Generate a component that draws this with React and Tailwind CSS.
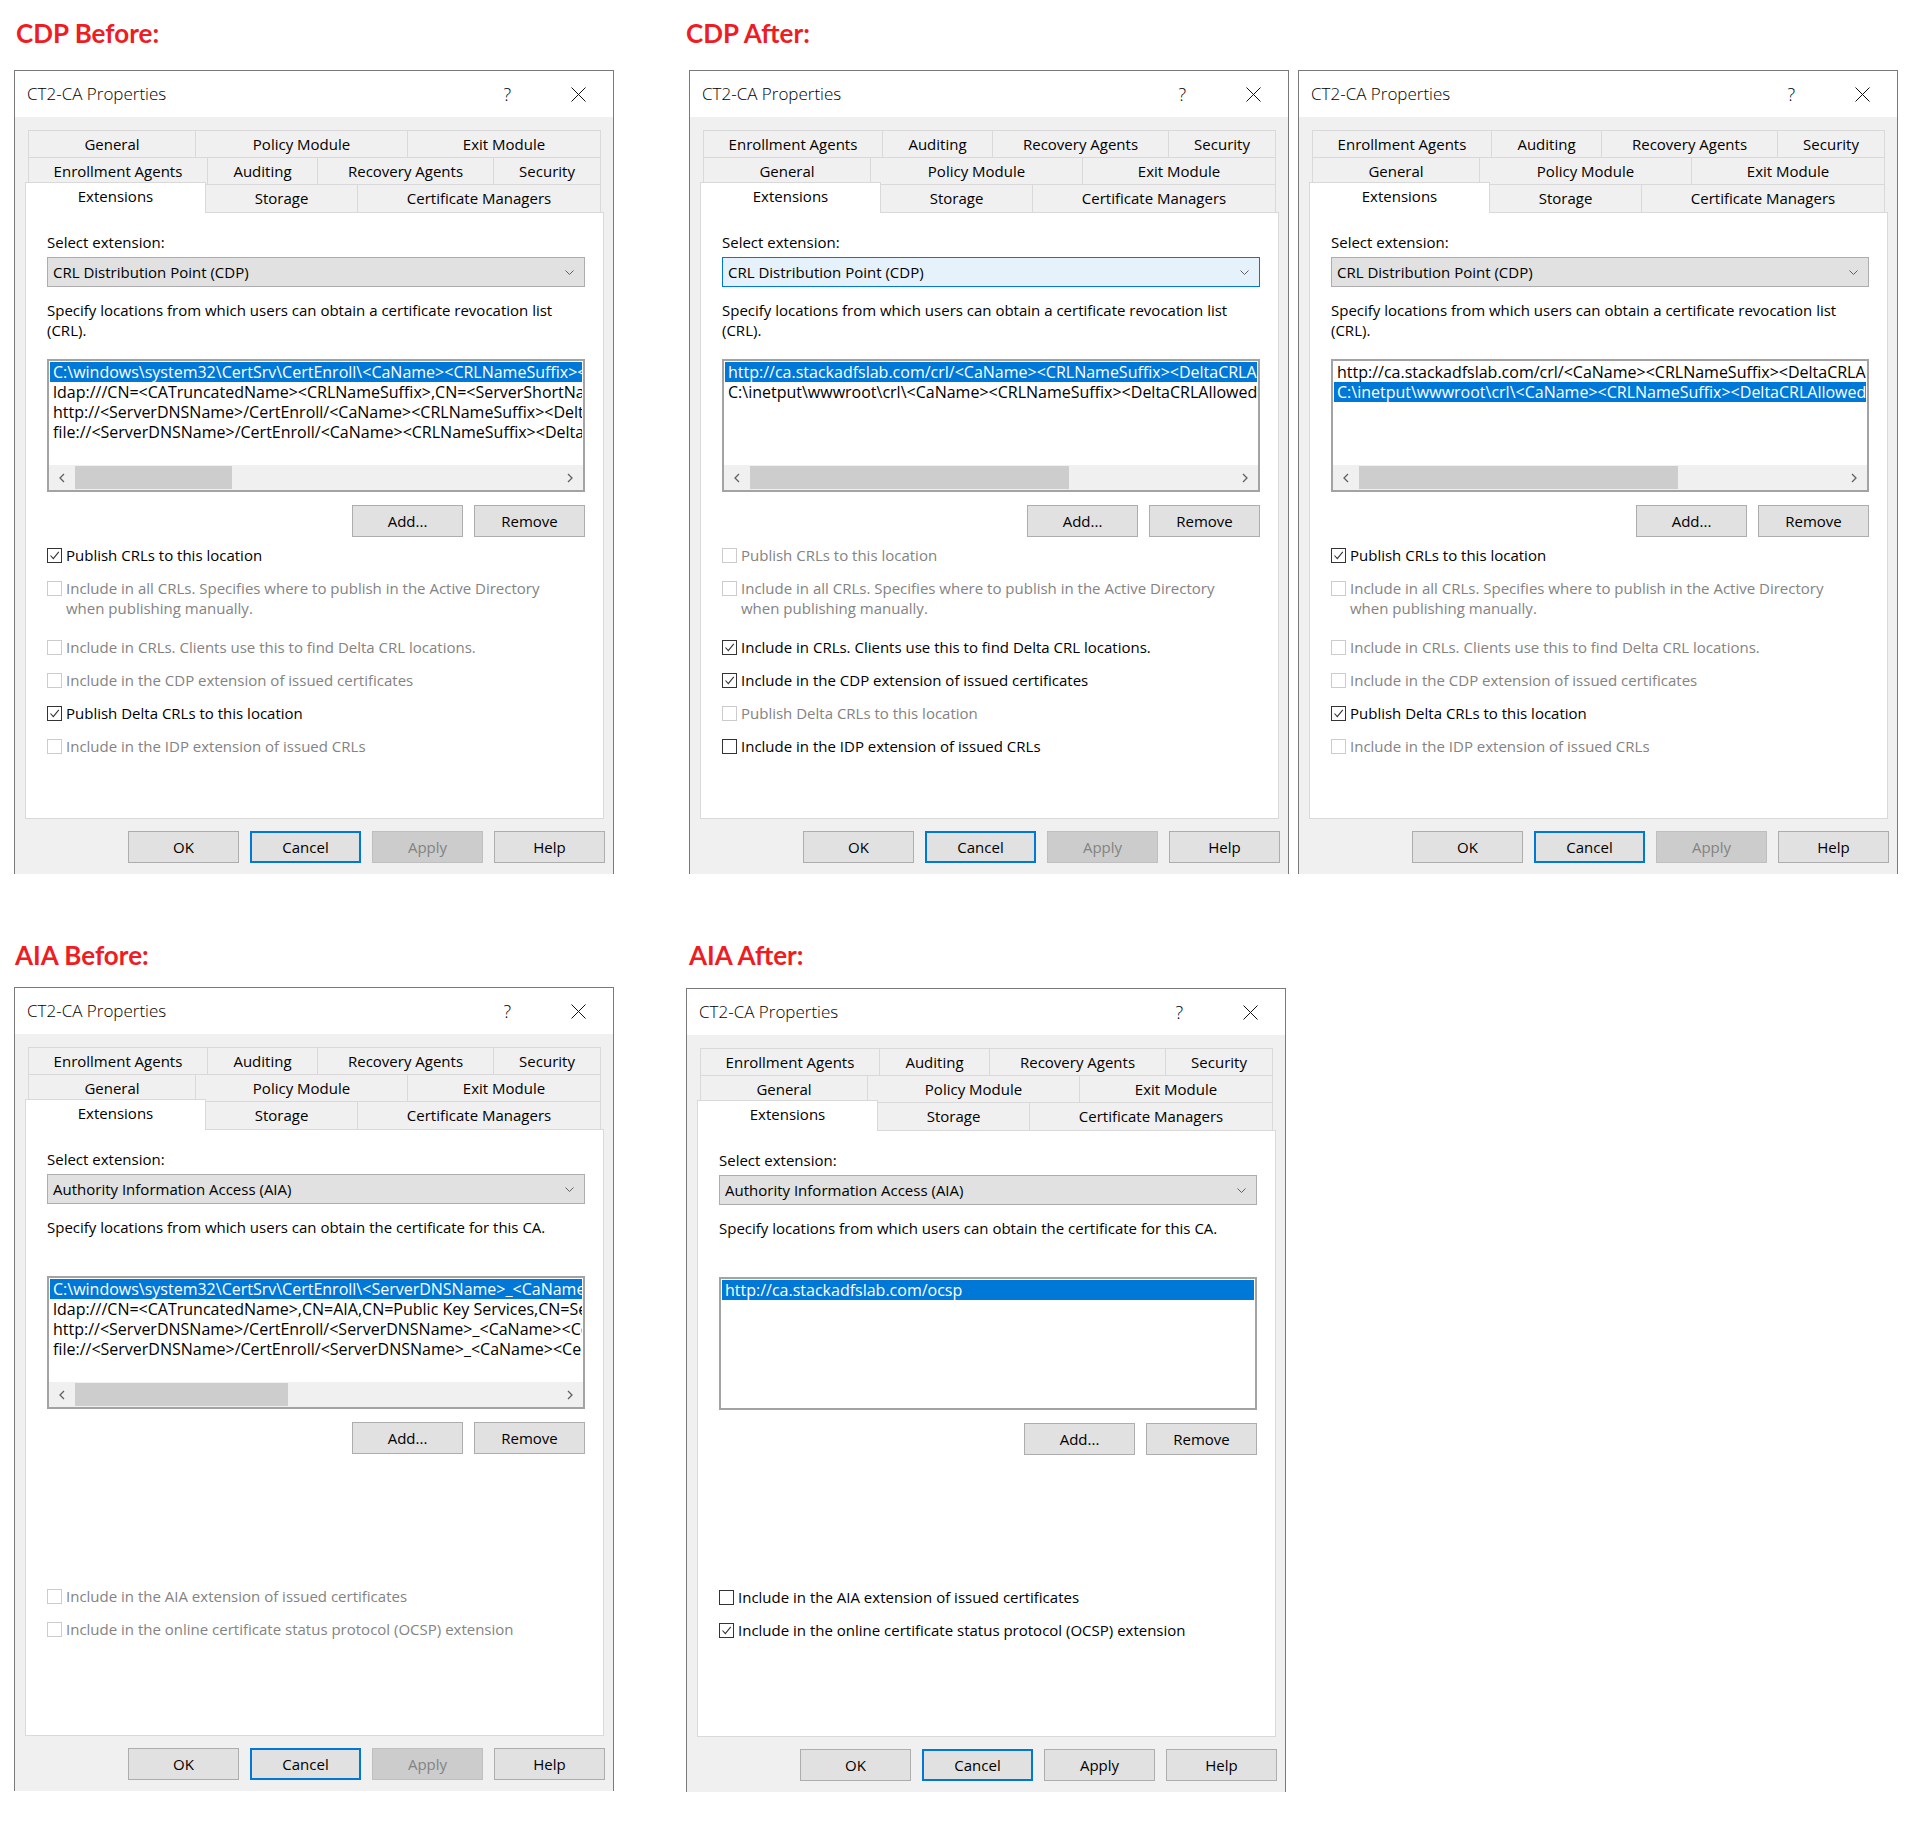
import React from 'react';

const FONT = "font-['Open_Sans','Noto_Sans',sans-serif]";

const ROW_GENERAL = [
  ['General', 'w-[168px]'],
  ['Policy Module', 'w-[212px]'],
  ['Exit Module', 'flex-1'],
];
const ROW_ENROLL = [
  ['Enrollment Agents', 'w-[180px]'],
  ['Auditing', 'w-[110px]'],
  ['Recovery Agents', 'w-[176px]'],
  ['Security', 'flex-1'],
];

const CDP_LABELS = [
  ['Publish CRLs to this location'],
  ['Include in all CRLs. Specifies where to publish in the Active Directory', 'when publishing manually.'],
  ['Include in CRLs. Clients use this to find Delta CRL locations.'],
  ['Include in the CDP extension of issued certificates'],
  ['Publish Delta CRLs to this location'],
  ['Include in the IDP extension of issued CRLs'],
];

// [checked, enabled] for each of the six CDP options
const cdpChecks = (states) =>
  CDP_LABELS.map((lines, i) => ({ lines, checked: states[i][0], enabled: states[i][1] }));

const CDP_DESC = ['Specify locations from which users can obtain a certificate revocation list', '(CRL).'];
const AIA_DESC = ['Specify locations from which users can obtain the certificate for this CA.'];

const CDP_BEFORE_ITEMS = [
  'C:\\windows\\system32\\CertSrv\\CertEnroll\\<CaName><CRLNameSuffix><DeltaCRLAllowed>.crl',
  'ldap:///CN=<CATruncatedName><CRLNameSuffix>,CN=<ServerShortName>,CN=CDP,CN=Public Key Services,CN=Services',
  'http://<ServerDNSName>/CertEnroll/<CaName><CRLNameSuffix><DeltaCRLAllowed>.crl',
  'file://<ServerDNSName>/CertEnroll/<CaName><CRLNameSuffix><DeltaCRLAllowed>.crl',
];
const CDP_AFTER_ITEMS = [
  'http://ca.stackadfslab.com/crl/<CaName><CRLNameSuffix><DeltaCRLAllowed>.crl',
  'C:\\inetput\\wwwroot\\crl\\<CaName><CRLNameSuffix><DeltaCRLAllowed>.crl',
];
const AIA_BEFORE_ITEMS = [
  'C:\\windows\\system32\\CertSrv\\CertEnroll\\<ServerDNSName>_<CaName><CertificateName>.crt',
  'ldap:///CN=<CATruncatedName>,CN=AIA,CN=Public Key Services,CN=Services,<ConfigurationContainer>',
  'http://<ServerDNSName>/CertEnroll/<ServerDNSName>_<CaName><CertificateName>.crt',
  'file://<ServerDNSName>/CertEnroll/<ServerDNSName>_<CaName><CertificateName>.crt',
];

const Heading = ({ children, className = '' }) => (
  <div className={`h-[70px] flex items-center font-['Lato',sans-serif] font-bold text-[26px] text-[#ee1d23] ${className}`}>
    {children}
  </div>
);

const TabRow = ({ tabs }) => (
  <div className="flex h-[27px]">
    {tabs.map(([label, w], i) => (
      <div
        key={label}
        className={`${w} h-full flex items-center justify-center border-t border-r border-[#d9d9d9] bg-[#f0f0f0] ${i === 0 ? 'border-l' : ''}`}
      >
        {label}
      </div>
    ))}
  </div>
);

const CheckBox = ({ checked, enabled }) => (
  <div className={`w-[15px] h-[15px] mt-[3px] shrink-0 border bg-white flex items-center justify-center ${enabled ? 'border-[#333333]' : 'border-[#cccccc]'}`}>
    {checked && (
      <svg width="11" height="11" viewBox="0 0 11 11">
        <path d="M1.5 5.5 L4.3 8.6 L9.8 1.8" fill="none" stroke="#333333" strokeWidth="1.1" />
      </svg>
    )}
  </div>
);

const Button = ({ children, variant = 'normal', className = '' }) => {
  const styles = {
    normal: 'border border-[#adadad] bg-[#e1e1e1] text-black',
    focus: 'border-2 border-[#0078d7] bg-[#e1e1e1] text-black',
    disabled: 'border border-[#bfbfbf] bg-[#cccccc] text-[#838383]',
  };
  return (
    <div className={`h-[32px] w-[111px] flex items-center justify-center ${styles[variant]} ${className}`}>
      {children}
    </div>
  );
};

const ListBox = ({ items, selected, thumb }) => (
  <div className="h-[133px] border-2 border-[#a3a3a3] bg-white flex flex-col overflow-hidden">
    <div className="flex-1 pt-px px-px overflow-hidden text-[16px]">
      {items.map((t, i) => (
        <div
          key={i}
          className={`h-5 leading-5 pl-[3px] whitespace-nowrap overflow-hidden ${i === selected ? 'bg-[#0078d7] text-white' : ''}`}
        >
          {t}
        </div>
      ))}
    </div>
    {thumb && (
      <div className="h-[25px] bg-[#f0f0f0] flex">
        <div className="w-[26px] flex items-center justify-center">
          <svg width="6" height="10" viewBox="0 0 6 10">
            <path d="M5 1 L1 5 L5 9" fill="none" stroke="#606060" strokeWidth="1.3" />
          </svg>
        </div>
        <div className="flex-1 py-px">
          <div className={`h-full bg-[#cdcdcd] ${thumb}`} />
        </div>
        <div className="w-[26px] flex items-center justify-center">
          <svg width="6" height="10" viewBox="0 0 6 10">
            <path d="M1 1 L5 5 L1 9" fill="none" stroke="#606060" strokeWidth="1.3" />
          </svg>
        </div>
      </div>
    )}
  </div>
);

const Dialog = ({
  firstRow,
  secondRow,
  combo,
  comboFocused,
  desc,
  items,
  selected,
  thumb,
  checks,
  checksTop,
  applyEnabled,
  className = '',
}) => (
  <div className={`w-[600px] border-t border-l border-r border-[#7a7a7a] text-[15px] text-black ${FONT} ${className}`}>
    {/* Title bar */}
    <div className="h-[46px] bg-white flex items-center pl-[12px] pr-[27px]">
      <span className="text-[17px] font-light">CT2-CA Properties</span>
      <span className="ml-auto text-[18px] font-light leading-none">?</span>
      <svg className="ml-[60px]" width="15" height="15" viewBox="0 0 15 15">
        <path d="M0.5 0.5 L14.5 14.5 M14.5 0.5 L0.5 14.5" stroke="#111111" strokeWidth="1" />
      </svg>
    </div>

    {/* Body */}
    <div className="bg-[#f0f0f0] pt-[13px] pb-[11px]">
      <div className="ml-[13px] w-[573px]">
        <TabRow tabs={firstRow} />
        <TabRow tabs={secondRow} />
        <div className="flex h-[28px] items-start">
          <div className="relative z-10 -ml-[3px] -mt-[2px] w-[181px] h-[31px] bg-white border-t border-l border-r border-[#d9d9d9] flex items-center justify-center pb-1">
            Extensions
          </div>
          <div className="w-[152px] h-full flex items-center justify-center border-t border-r border-[#d9d9d9]">Storage</div>
          <div className="flex-1 h-full flex items-center justify-center border-t border-r border-[#d9d9d9]">Certificate Managers</div>
        </div>
      </div>

      {/* Tab page */}
      <div className="ml-[10px] w-[579px] h-[607px] bg-white border border-[#d9d9d9] pl-[21px] pr-[18px] pt-[19px]">
        <div className="h-5 leading-5">Select extension:</div>
        <div
          className={`mt-[5px] h-[30px] border flex items-center pl-[5px] pr-[10px] ${comboFocused ? 'bg-[#e5f1fb] border-[#0078d7]' : 'bg-[#e1e1e1] border-[#adadad]'}`}
        >
          <span>{combo}</span>
          <svg className="ml-auto" width="9" height="5" viewBox="0 0 9 5">
            <path d="M0.5 0.5 L4.5 4.5 L8.5 0.5" fill="none" stroke="#606060" strokeWidth="1" />
          </svg>
        </div>
        <div className="mt-[14px] h-[58px] leading-[19.5px]">
          {desc.map((l) => (
            <div key={l}>{l}</div>
          ))}
        </div>
        <ListBox items={items} selected={selected} thumb={thumb} />
        <div className="mt-[13px] flex justify-end gap-[11px]">
          <Button>Add...</Button>
          <Button>Remove</Button>
        </div>

        <div className={`flex flex-col gap-[13px] ${checksTop}`}>
          {checks.map((c, i) => (
            <div key={i} className={`flex gap-[4px] leading-5 ${c.lines.length > 1 ? 'mb-[6px]' : ''}`}>
              <CheckBox checked={c.checked} enabled={c.enabled} />
              <div className={c.enabled ? 'text-black' : 'text-[#838383]'}>
                {c.lines.map((l) => (
                  <div key={l}>{l}</div>
                ))}
              </div>
            </div>
          ))}
        </div>
      </div>

      {/* Dialog buttons */}
      <div className="mt-[12px] pr-[8px] flex justify-end gap-[11px]">
        <Button>OK</Button>
        <Button variant="focus">Cancel</Button>
        <Button variant={applyEnabled ? 'normal' : 'disabled'}>Apply</Button>
        <Button>Help</Button>
      </div>
    </div>
  </div>
);

export default function App() {
  return (
    <div className="w-[1919px] h-[1837px] bg-white overflow-hidden">
      {/* CDP */}
      <div className="flex items-start">
        <div className="ml-[14px] w-[600px]">
          <Heading className="pb-1 pl-[2px]">CDP Before:</Heading>
          <Dialog
            firstRow={ROW_GENERAL}
            secondRow={ROW_ENROLL}
            combo="CRL Distribution Point (CDP)"
            desc={CDP_DESC}
            items={CDP_BEFORE_ITEMS}
            selected={0}
            thumb="w-[157px]"
            checks={cdpChecks([[true, true], [false, false], [false, false], [false, false], [true, true], [false, false]])}
            checksTop="mt-[8px]"
          />
        </div>
        <div className="ml-[75px]">
          <Heading className="pb-1 -ml-[3px]">CDP After:</Heading>
          <div className="flex gap-[9px]">
            <Dialog
              firstRow={ROW_ENROLL}
              secondRow={ROW_GENERAL}
              combo="CRL Distribution Point (CDP)"
              comboFocused
              desc={CDP_DESC}
              items={CDP_AFTER_ITEMS}
              selected={0}
              thumb="w-[319px]"
              checks={cdpChecks([[false, false], [false, false], [true, true], [true, true], [false, false], [false, true]])}
              checksTop="mt-[8px]"
            />
            <Dialog
              firstRow={ROW_ENROLL}
              secondRow={ROW_GENERAL}
              combo="CRL Distribution Point (CDP)"
              desc={CDP_DESC}
              items={CDP_AFTER_ITEMS}
              selected={1}
              thumb="w-[319px]"
              checks={cdpChecks([[true, true], [false, false], [false, false], [false, false], [true, true], [false, false]])}
              checksTop="mt-[8px]"
            />
          </div>
        </div>
      </div>

      {/* AIA */}
      <div className="mt-[43px] flex items-start">
        <div className="ml-[14px] w-[600px]">
          <Heading className="pt-[6px] pl-px">AIA Before:</Heading>
          <Dialog
            firstRow={ROW_ENROLL}
            secondRow={ROW_GENERAL}
            combo="Authority Information Access (AIA)"
            desc={AIA_DESC}
            items={AIA_BEFORE_ITEMS}
            selected={0}
            thumb="w-[213px]"
            checks={[
              { lines: ['Include in the AIA extension of issued certificates'], checked: false, enabled: false },
              { lines: ['Include in the online certificate status protocol (OCSP) extension'], checked: false, enabled: false },
            ]}
            checksTop="mt-[132px]"
          />
        </div>
        <div className="ml-[72px]">
          <Heading className="pt-[6px] pl-[3px]">AIA After:</Heading>
          <Dialog
            className="mt-px"
            firstRow={ROW_ENROLL}
            secondRow={ROW_GENERAL}
            combo="Authority Information Access (AIA)"
            desc={AIA_DESC}
            items={['http://ca.stackadfslab.com/ocsp']}
            selected={0}
            checks={[
              { lines: ['Include in the AIA extension of issued certificates'], checked: false, enabled: true },
              { lines: ['Include in the online certificate status protocol (OCSP) extension'], checked: true, enabled: true },
            ]}
            checksTop="mt-[132px]"
            applyEnabled
          />
        </div>
      </div>
    </div>
  );
}
